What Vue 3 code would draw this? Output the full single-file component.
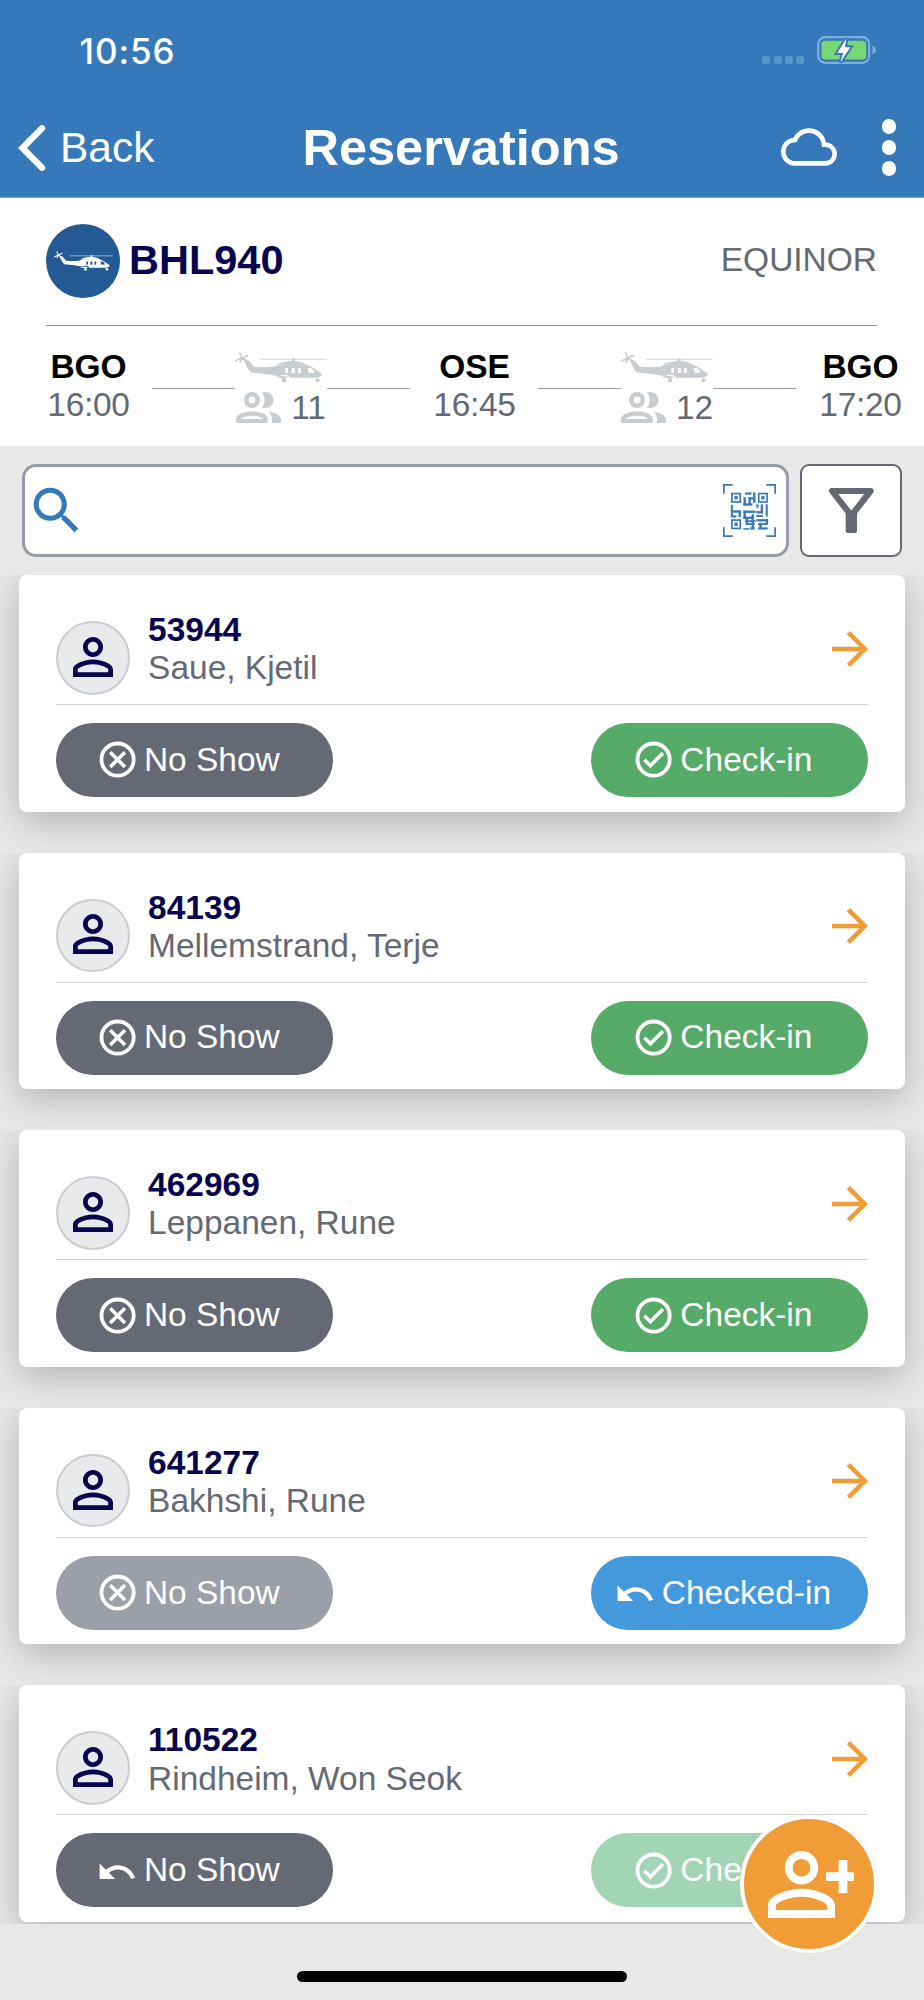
<script setup>
import { h } from 'vue'

const passengers = [
  { id: '53944', name: 'Saue, Kjetil', noShow: 'idle', check: 'idle' },
  { id: '84139', name: 'Mellemstrand, Terje', noShow: 'idle', check: 'idle' },
  { id: '462969', name: 'Leppanen, Rune', noShow: 'idle', check: 'idle' },
  { id: '641277', name: 'Bakhshi, Rune', noShow: 'faded', check: 'done' },
  { id: '110522', name: 'Rindheim, Won Seok', noShow: 'undo', check: 'faded' }
]

const stops = [
  { code: 'BGO', time: '16:00', pax: '11' },
  { code: 'OSE', time: '16:45', pax: '12' },
  { code: 'BGO', time: '17:20' }
]

// Modules of the QR glyph: x, y, width, height
const qr = [
  [66, 26, 18, 5], [90, 26, 6, 30], [62, 40, 6, 24], [62, 58, 25, 6], [77, 42, 6, 20], [77, 40, 18, 5],
  [24, 63, 5, 33], [24, 79, 29, 6], [47, 80, 6, 18], [24, 94, 15, 5],
  [100, 62, 5, 8], [113, 62, 6, 25], [100, 81, 19, 6], [128, 62, 5, 35],
  [62, 80, 34, 6], [62, 80, 6, 24], [62, 98, 30, 6], [86, 90, 6, 20], [100, 93, 19, 5],
  [68, 104, 6, 16], [68, 108, 28, 5], [70, 117, 24, 5], [86, 112, 6, 22],
  [100, 105, 34, 6], [128, 105, 6, 16], [105, 117, 28, 5], [109, 118, 6, 14], [105, 130, 28, 5],
  [62, 132, 16, 4], [82, 130, 12, 5]
]
const finders = [[24, 26], [104, 26], [24, 105]]

const undoPath = 'M12.5 8c-2.65 0-5.05.99-6.9 2.6L2 7v9h9l-3.62-3.62c1.39-1.16 3.16-1.88 5.12-1.88 3.54 0 6.55 2.31 7.6 5.5l2.37-.78C21.08 11.03 17.15 8 12.5 8z'
const personPath = 'M12 5.900c1.160 0 2.100.94 2.100 2.100s-.94 2.100-2.100 2.100S9.900 9.160 9.900 8s.94-2.100 2.100-2.100m0 9c2.970 0 6.100 1.460 6.100 2.100v1.100H5.900V17c0-.64 3.130-2.100 6.100-2.100M12 4C9.790 4 8 5.790 8 8s1.790 4 4 4 4-1.790 4-4-1.790-4-4-4zm0 9c-2.670 0-8 1.340-8 4v3h16v-3c0-2.660-5.330-4-8-4z'

const Helicopter = () =>
  h('svg', { viewBox: '18 24 274 91' }, [
    h('path', {
      d: 'M38 42L31 25M38 42L57 34M38 42L18 51M38 42L52 51M38 42L32 56',
      stroke: 'currentColor', 'stroke-width': 5, fill: 'none'
    }),
    h('path', { d: 'M91 45.500H292', stroke: 'currentColor', 'stroke-width': 3, opacity: 0.8 }),
    h('path', { d: 'M188 43h8v8h-8z', fill: 'currentColor' }),
    h('path', {
      'fill-rule': 'evenodd',
      fill: 'currentColor',
      d: 'M42 44L59 50L74 68C98 71 118 68 134 68C146 62 158 62 170 60H224C240 64 254 71 262 80L274 87C278 92 275 98 268 99L258 101H182C178 92 166 90 156 93L146 96C130 92 100 88 66 85L55 72ZM168 72h8v15h-8zM187 72h9v15h-9zM206 72h8v15h-8zM234 72h10c6 3 10 8 11 14l-17 1z'
    }),
    h('path', { d: 'M140 62C156 54 174 51 190 50C206 51 218 54 228 60Z', fill: 'currentColor' }),
    h('path', { d: 'M138 98C148 96 160 94 176 98L170 102H158Z', fill: 'currentColor' }),
    h('circle', { cx: 164, cy: 108, r: 6.5, fill: 'currentColor' }),
    h('circle', { cx: 264, cy: 108, r: 6, fill: 'currentColor' })
  ])
</script>

<template>
  <div class="screen">
    <header class="top">
      <div class="status">
        <span class="clock">10:56</span>
        <div class="status-icons">
          <span class="signal"><i v-for="n in 4" :key="n"></i></span>
          <svg class="battery" viewBox="0 0 60 28">
            <rect x="1.200" y="1.200" width="51" height="25.600" rx="7" fill="none" stroke="#80b0dc" stroke-width="2.200" />
            <rect x="4.500" y="4.700" width="44.700" height="18.800" rx="3.500" fill="#78d872" />
            <path d="M55.500 9.500C60 11.500 60 16.500 55.500 18.500Z" fill="#80b0dc" />
            <path d="M29.500 2.300L20.300 17H26.200L23.300 26.500L33.300 11.300H28Z" fill="#fff" stroke="#3579ba" stroke-width="4" paint-order="stroke" />
          </svg>
        </div>
      </div>
      <nav class="nav">
        <div class="back">
          <svg viewBox="0 0 30 48"><path d="M25 4.300L5.500 24L25 43.700" fill="none" stroke="#fff" stroke-width="6.400" stroke-linecap="round" /></svg>
          <span>Back</span>
        </div>
        <h1>Reservations</h1>
        <div class="nav-actions">
          <svg class="cloud" viewBox="0 0 24 24"><path fill="#fff" d="M19.350 10.040C18.670 6.590 15.640 4 12 4 9.110 4 6.600 5.640 5.350 8.040 2.340 8.360 0 10.910 0 14c0 3.310 2.690 6 6 6h13c2.760 0 5-2.240 5-5 0-2.640-2.050-4.780-4.650-4.960zM19 18H6c-2.210 0-4-1.790-4-4s1.790-4 4-4h.71C7.370 7.690 9.480 6 12 6c3.040 0 5.500 2.460 5.500 5.500v.5H19c1.660 0 3 1.340 3 3s-1.340 3-3 3z" /></svg>
          <span class="kebab"><i v-for="n in 3" :key="n"></i></span>
        </div>
      </nav>
    </header>

    <section class="flight">
      <div class="flight-head">
        <span class="logo"><Helicopter class="heli-logo" /></span>
        <strong>BHL940</strong>
        <span class="client">EQUINOR</span>
      </div>
      <div class="route">
        <template v-for="(s, i) in stops" :key="i">
          <div class="stop"><b>{{ s.code }}</b><span>{{ s.time }}</span></div>
          <div v-if="s.pax" class="leg">
            <i class="line"></i>
            <div class="leg-info">
              <Helicopter class="heli" />
              <div class="pax">
                <svg viewBox="0 0 45 31.500">
                  <path fill="#c8cdd1" fill-rule="evenodd" d="M16 0a8 8 0 1 1 0 16a8 8 0 1 1 0-16zM16 4.600a3.400 3.400 0 1 0 0 6.800a3.400 3.400 0 1 0 0-6.800zM0 31.500V26.500C1 22 8 19.500 16 19.500S31 22 31.700 26.500V31.500ZM5 27H27C25 25 21 23.800 16 23.800S7 25 5 27Z" />
                  <path fill="#c8cdd1" d="M26 .5C32 -1.500 37.500 2.500 37.500 8S32 17.500 26 15.500C29.500 11 29.500 5 26 .5ZM33 20C39 20.500 44.500 23 45 27.500V31.500H36V27.500C36 24.500 35 22 33 20Z" />
                </svg>
                <span>{{ s.pax }}</span>
              </div>
            </div>
            <i class="line"></i>
          </div>
        </template>
      </div>
    </section>

    <section class="tools">
      <div class="search">
        <svg class="lens" viewBox="0 0 24 24"><path fill="#3579ba" d="M15.500 14h-.79l-.28-.27C15.410 12.590 16 11.110 16 9.500 16 5.910 13.090 3 9.500 3S3 5.910 3 9.500 5.910 16 9.500 16c1.610 0 3.090-.59 4.230-1.570l.27.28v.79l5 4.990L20.490 19l-4.990-5zm-6 0C7.010 14 5 11.990 5 9.500S7.010 5 9.500 5 14 7.010 14 9.500 11.990 14 9.500 14z" /></svg>
        <svg class="qr" viewBox="0 0 158 158" fill="#3579ba">
          <path d="M2.500 29V2.500H29M129 2.500H155.500V29M155.500 129V155.500H129M29 155.500H2.500V129" fill="none" stroke="#3579ba" stroke-width="5" />
          <g v-for="(f, i) in finders" :key="'f' + i">
            <rect :x="f[0] + 2.5" :y="f[1] + 2.5" width="25" height="25" fill="none" stroke="#3579ba" stroke-width="5" />
            <rect :x="f[0] + 10" :y="f[1] + 10" width="10" height="10" />
          </g>
          <rect v-for="(r, i) in qr" :key="i" :x="r[0]" :y="r[1]" :width="r[2]" :height="r[3]" stroke="#3579ba" stroke-width="1" />
        </svg>
      </div>
      <div class="filter">
        <svg viewBox="0 0 45 45"><path fill="#646974" fill-rule="evenodd" d="M2.500 0H42C44.500 0 45.500 3 44 5L28 25.500V43C28 44.300 27.300 45 26 45H18.700C17.400 45 16.700 44.300 16.700 43V25.500L.8 5C-.8 3 0 0 2.500 0ZM9.300 6L22.300 22.500L35.200 6Z" /></svg>
      </div>
    </section>

    <main class="list">
      <div v-for="p in passengers" :key="p.id" class="item">
        <article class="card">
          <div class="person">
            <span class="avatar"><svg viewBox="0 0 24 24"><path fill="#07054f" :d="personPath" /></svg></span>
            <div class="who"><b>{{ p.id }}</b><span>{{ p.name }}</span></div>
            <svg class="arrow" viewBox="0 0 24 24"><path fill="#f09c37" d="M12 4l-1.410 1.410L16.170 11H4v2h12.170l-5.580 5.590L12 20l8-8z" /></svg>
          </div>
          <div class="actions">
            <div class="btn gray" :class="{ faded: p.noShow === 'faded' }">
              <svg v-if="p.noShow === 'undo'" viewBox="-0.070 -1.300 24.900 24.900"><path fill="#fff" :d="undoPath" /></svg>
              <svg v-else viewBox="0 0 24 24" fill="none" stroke="#fff">
                <circle cx="12" cy="12" r="8.950" stroke-width="2.100" />
                <path d="M7.900 7.900L16.100 16.100M16.100 7.900L7.900 16.100" stroke-width="2" />
              </svg>
              <span>No Show</span>
            </div>
            <div class="btn" :class="p.check === 'done' ? 'blue' : p.check === 'faded' ? 'green faded' : 'green'">
              <svg v-if="p.check === 'done'" viewBox="-0.070 -1.300 24.900 24.900"><path fill="#fff" :d="undoPath" /></svg>
              <svg v-else viewBox="0 0 24 24" fill="none" stroke="#fff">
                <circle cx="12" cy="12" r="8.950" stroke-width="2.100" />
                <path d="M6.900 12.100L10.200 15.400L17.200 8.400" stroke-width="2" />
              </svg>
              <span>{{ p.check === 'done' ? 'Checked-in' : 'Check-in' }}</span>
            </div>
          </div>
        </article>
      </div>
    </main>

    <footer class="bottom"><i class="home"></i></footer>

    <div class="fab">
      <svg viewBox="4 4 20.700 16"><path fill="#fff" :d="personPath" /><path fill="#fff" d="M20.850 6.150h2.100v2.950h1.750v2.050h-1.750v2.950h-2.100v-2.950h-3v-2.050h3z" /></svg>
    </div>
  </div>
</template>

<style>
body {
  margin: 0;
  background: #e8e8e8;
}
</style>

<style scoped>
.screen {
  position: relative;
  width: 924px;
  height: 2000px;
  overflow: hidden;
  background: #e8e8e8;
  font-family: "Liberation Sans", Arial, sans-serif;
  font-size: 33.480px;
  line-height: 38.300px;
  color: #646974;
}
.screen * {
  box-sizing: border-box;
}
svg {
  display: block;
  flex: none;
}
.top {
  height: 198px;
  background: #3579ba;
  border-bottom: 1px solid #9a9c9f;
  color: #fff;
}
.status {
  height: 98px;
  padding: 3px 49px 0 79.500px;
  display: flex;
  align-items: center;
  justify-content: space-between;
}
.clock {
  font-family: Inter, sans-serif;
  font-weight: 500;
  font-size: 35px;
  line-height: 42px;
  letter-spacing: 0.9px;
}
.status-icons {
  display: flex;
  align-items: center;
  gap: 13px;
}
.signal {
  display: flex;
  gap: 3.200px;
  padding-top: 18px;
}
.signal i {
  width: 8px;
  height: 8px;
  border-radius: 2.500px;
  background: #5798cb;
}
.battery {
  width: 60px;
  height: 28px;
  margin: 0 -2px 1px 0;
}
.nav {
  height: 99px;
  padding: 0 28px 0 18px;
  display: grid;
  grid-template-columns: 1fr auto 1fr;
  align-items: center;
}
.back {
  display: flex;
  align-items: center;
  gap: 12px;
  font-size: 42.500px;
  line-height: 48px;
}
.back svg {
  width: 30px;
  height: 48px;
  margin-left: -1px;
  margin-right: 1px;
}
h1 {
  margin: 0 0 0 8px;
  font-size: 50.500px;
  line-height: 58px;
}
.nav-actions {
  display: flex;
  align-items: center;
  justify-content: flex-end;
  gap: 45px;
}
.cloud {
  width: 56px;
  height: 56px;
}
.kebab {
  display: grid;
  gap: 6.700px;
}
.kebab i {
  width: 14.300px;
  height: 14.300px;
  border-radius: 50%;
  background: #fff;
}
.flight {
  height: 248px;
  background: #fff;
}
.flight-head {
  height: 128px;
  margin: 0 47px 0 46px;
  border-bottom: 1px solid #8b8d90;
  display: flex;
  align-items: center;
}
.logo {
  width: 74px;
  height: 74px;
  margin-bottom: 2px;
  border-radius: 50%;
  background: #245a94;
  color: #fff;
  display: grid;
  place-items: center;
}
.heli-logo {
  width: 59px;
  height: 20px;
}
.flight-head strong {
  margin-left: 9px;
  margin-bottom: 3px;
  font-size: 41.500px;
  line-height: 48px;
  color: #07054f;
}
.client {
  margin-left: auto;
  margin-bottom: 3px;
}
.route {
  padding: 21.500px 0 0 24px;
  display: flex;
}
.stop {
  flex: 1;
  padding-left: 1px;
  display: grid;
  justify-items: center;
  align-content: start;
}
.stop b {
  color: #000;
}
.stop span {
  letter-spacing: -0.3px;
}
.leg {
  width: 258px;
  display: flex;
}
.line {
  flex: 1;
  height: 1.500px;
  margin-top: 40px;
  background: #9aa0aa;
}
.leg-info {
  width: 92px;
  padding-top: 4.500px;
}
.heli {
  width: 92px;
  height: 30.500px;
  color: #c8cdd1;
}
.pax {
  margin-top: 6px;
  display: flex;
  align-items: center;
  justify-content: center;
  gap: 10px;
}
.pax svg {
  width: 45px;
  height: 31.500px;
}
.tools {
  height: 129px;
  padding: 18px 22px 18px;
  display: flex;
  gap: 11.500px;
}
.search {
  flex: 1;
  border: 3px solid #959da8;
  border-radius: 14px;
  background: #fff;
  display: flex;
  align-items: center;
  justify-content: space-between;
  padding: 0 9.500px 0 1px;
}
.lens {
  width: 61.300px;
  height: 61.300px;
}
.qr {
  width: 53px;
  height: 53px;
}
.filter {
  width: 102px;
  border: 2px solid #646974;
  border-radius: 9px;
  background: #fff;
  display: grid;
  place-items: center;
}
.filter svg {
  width: 45px;
  height: 45px;
}
.list {
  height: 1349px;
  overflow: hidden;
}
.item {
  height: 277.600px;
  padding: 0 19px 0 19px;
  overflow: hidden;
  background: #e8e8e8;
}
.card {
  height: 236.700px;
  padding: 36px 37px 0 37px;
  border-radius: 8px;
  background: #fff;
  box-shadow: 0 9px 36px rgba(0, 0, 0, 0.24);
}
.person {
  height: 94px;
  border-bottom: 1px solid #d3d7db;
  display: flex;
  align-items: flex-start;
}
.avatar {
  width: 73.600px;
  height: 73.600px;
  margin-top: 10px;
  border: 2px solid #c9cdd2;
  border-radius: 50%;
  background: #e8eaec;
  display: grid;
  place-items: center;
}
.avatar svg {
  width: 60px;
  height: 60px;
  margin-top: -2px;
}
.who {
  flex: 1;
  margin-left: 18.500px;
  display: grid;
}
.who b {
  color: #07054f;
}
.arrow {
  width: 54px;
  height: 54px;
  margin: 10.700px -9px 0 0;
}
.actions {
  padding-top: 18px;
  display: flex;
  justify-content: space-between;
}
.btn {
  width: 277.400px;
  height: 74px;
  border-radius: 37px;
  padding-right: 14px;
  display: flex;
  align-items: center;
  justify-content: center;
  gap: 5px;
  color: #fff;
}
.btn svg {
  width: 43.200px;
  height: 43.200px;
}
.gray {
  background: #646974;
}
.gray.faded {
  background: #9b9fa8;
}
.green {
  background: #57ab69;
}
.green.faded {
  background: #a1d5b4;
}
.blue {
  background: #4499dc;
}
.bottom {
  height: 76px;
  padding-top: 46.700px;
  display: flex;
  justify-content: center;
}
.home {
  width: 330px;
  height: 11.300px;
  border-radius: 6px;
  background: #000;
}
.fab {
  position: absolute;
  left: 739.700px;
  top: 1815px;
  width: 138px;
  height: 138px;
  border: 4.500px solid #fff;
  border-radius: 50%;
  background: #f09c37;
  padding: 31.500px 0 0 24px;
  box-shadow: 0 0 1px rgba(240, 156, 55, 0.6);
}
.fab svg {
  width: 86.700px;
  height: 67px;
}
</style>
